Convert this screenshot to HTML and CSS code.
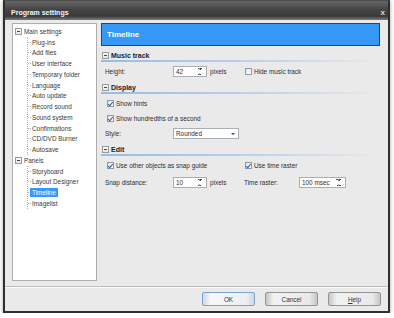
FILE: index.html
```html
<!DOCTYPE html>
<html lang="en">
<head>
    <meta charset="UTF-8">
    <title>Program settings</title>
    <link rel="stylesheet" href="styles.css">
</head>
<body>
    <div class="window">
        <div class="titlebar">
            <span class="title">Program settings</span>
            <span class="close">x</span>
        </div>
        <div class="content">
            <div class="tree">
                <div class="node"><span class="toggle"></span>Main settings</div>
                <div class="children">
                    <div class="leaf">Plug-ins</div>
                    <div class="leaf">Add files</div>
                    <div class="leaf">User interface</div>
                    <div class="leaf">Temporary folder</div>
                    <div class="leaf">Language</div>
                    <div class="leaf">Auto update</div>
                    <div class="leaf">Record sound</div>
                    <div class="leaf">Sound system</div>
                    <div class="leaf">Confirmations</div>
                    <div class="leaf">CD/DVD Burner</div>
                    <div class="leaf">Autosave</div>
                </div>
                <div class="node"><span class="toggle"></span>Panels</div>
                <div class="children">
                    <div class="leaf">Storyboard</div>
                    <div class="leaf">Layout Designer</div>
                    <div class="leaf"><span class="selected">Timeline</span></div>
                    <div class="leaf">Imagelist</div>
                </div>
            </div>

            <div class="panel">
                <div class="panel-head">Timeline</div>

                <div class="sec-head"><span class="toggle"></span>Music track</div>
                <div class="row first">
                    <div class="col1">
                        <span class="label">Height:</span>
                        <span class="spin w34"><span class="val">42</span><span class="arrows"></span></span>
                        <span class="unit">pixels</span>
                    </div>
                    <label class="check"><span class="box"></span>Hide music track</label>
                </div>

                <div class="sec-head"><span class="toggle"></span>Display</div>
                <div class="row first">
                    <label class="check"><span class="box on"></span>Show hints</label>
                </div>
                <div class="row">
                    <label class="check"><span class="box on"></span>Show hundredths of a second</label>
                </div>
                <div class="row">
                    <span class="label">Style:</span>
                    <span class="combo"><span class="val">Rounded</span><span class="drop"></span></span>
                </div>

                <div class="sec-head"><span class="toggle"></span>Edit</div>
                <div class="row first">
                    <div class="col1">
                        <label class="check"><span class="box on"></span>Use other objects as snap guide</label>
                    </div>
                    <label class="check"><span class="box on"></span>Use time raster</label>
                </div>
                <div class="row snap">
                    <div class="col1">
                        <span class="label">Snap distance:</span>
                        <span class="spin w34"><span class="val">10</span><span class="arrows"></span></span>
                        <span class="unit">pixels</span>
                    </div>
                    <span class="label short">Time raster:</span>
                    <span class="spin w47"><span class="val">100 msec</span><span class="arrows"></span></span>
                </div>
            </div>
        </div>
        <div class="footer">
            <button class="btn default">OK</button>
            <button class="btn">Cancel</button>
            <button class="btn"><u>H</u>elp</button>
        </div>
    </div>
</body>
</html>
```

FILE: styles.css
```css
body {
    margin: 0;
    background: #fff;
    font-family: "Liberation Sans", Arial, sans-serif;
    font-size: 6.4px;
    color: #2e2e2e;
}
.window {
    margin-left: 3px;
    width: 387px;
    height: 313px;
    box-sizing: border-box;
    border: 2px solid #2f2f2f;
    border-top: 1px solid #4d4d4d;
    background: #eaeaea;
    box-shadow: 0 1px 4px rgba(0, 0, 0, 0.35);
    display: flex;
    flex-direction: column;
}
.titlebar {
    height: 19px;
    box-sizing: border-box;
    padding: 3px 3px 0 6px;
    display: flex;
    align-items: center;
    justify-content: space-between;
    background: linear-gradient(to bottom, #666 0%, #444 45%, #3a3a3a 80%, #7d7d7d 100%);
    color: #f4f4f4;
}
.title {
    font-weight: bold;
    font-size: 7px;
}
.close {
    font-weight: bold;
    font-size: 8px;
    color: #d8d8d8;
}
.content {
    display: flex;
    gap: 4px;
    padding: 3px 8px 0 7px;
    height: 261px;
    box-sizing: border-box;
}

/* tree on the left */
.tree {
    width: 85px;
    box-sizing: border-box;
    border: 1px solid #adadad;
    background: #fff;
    padding: 2px 0 0 1px;
    color: #3a3a3a;
}
.node,
.leaf {
    height: 10.75px;
    display: flex;
    align-items: center;
    white-space: nowrap;
}
.toggle {
    width: 7px;
    height: 7px;
    box-sizing: border-box;
    border: 1px solid #9a9a9a;
    background: linear-gradient(#fff, #e6e6e6);
    display: flex;
    align-items: center;
    justify-content: center;
    flex-shrink: 0;
}
.toggle::after {
    content: "";
    width: 3px;
    height: 1px;
    background: #444;
}
.node .toggle {
    margin: 0 2px 0 1px;
}
.children {
    margin-left: 13px;
    border-left: 1px dotted #b0b0b0;
}
.leaf::before {
    content: "";
    width: 3px;
    border-top: 1px dotted #b0b0b0;
    margin-right: 1px;
}
.selected {
    background: #3399ff;
    color: #fff;
    margin-left: -2px;
    padding: 1px 2px;
}

/* right panel */
.panel {
    flex: 1;
}
.panel-head {
    height: 23px;
    box-sizing: border-box;
    border: 1px solid #24466c;
    background: #3597f6;
    color: #fff;
    font-weight: bold;
    font-size: 8px;
    padding-left: 5px;
    display: flex;
    align-items: center;
}
.sec-head {
    margin-top: 3px;
    height: 12px;
    box-sizing: border-box;
    padding-bottom: 2px;
    display: flex;
    align-items: center;
    font-weight: bold;
    font-size: 7px;
    color: #1c1c1c;
    background: linear-gradient(to right, #98bbe2, #bcd2ec 55%, rgba(234, 234, 234, 0)) bottom / 100% 2px no-repeat;
}
.panel-head + .sec-head {
    margin-top: 4px;
}
.sec-head .toggle {
    margin: 0 2px 0 1px;
}
.row {
    height: 15px;
    display: flex;
    align-items: center;
    padding-left: 4px;
    white-space: nowrap;
}
.row.first {
    margin-top: 2px;
}
.row.snap {
    margin-top: 2px;
}
.col1 {
    width: 139px;
    display: flex;
    align-items: center;
}
.label {
    width: 68px;
}
.label.short {
    width: 55px;
}
.unit {
    margin-left: 3px;
}
.spin,
.combo {
    height: 11px;
    box-sizing: border-box;
    border: 1px solid #a9aeb5;
    background: #fff;
    display: flex;
    align-items: center;
    justify-content: space-between;
    padding: 0 2px 0 2px;
}
.w34 {
    width: 34px;
}
.w47 {
    width: 47px;
}
.combo {
    width: 66px;
}
.arrows {
    width: 5px;
    height: 7px;
    background:
        linear-gradient(to top right, transparent 50%, #444 50%) left top / 2.5px 2.5px no-repeat,
        linear-gradient(to top left, transparent 50%, #444 50%) right top / 2.5px 2.5px no-repeat,
        linear-gradient(to bottom right, transparent 50%, #444 50%) left bottom / 2.5px 2.5px no-repeat,
        linear-gradient(to bottom left, transparent 50%, #444 50%) right bottom / 2.5px 2.5px no-repeat;
    margin-right: 2px;
}
.drop {
    width: 0;
    height: 0;
    border-left: 2px solid transparent;
    border-right: 2px solid transparent;
    border-top: 2px solid #444;
    margin-right: 1px;
}
.check {
    display: flex;
    align-items: center;
    margin-left: 2px;
}
.col1 + .check {
    margin-left: 1px;
}
.box {
    width: 7px;
    height: 7px;
    box-sizing: border-box;
    border: 1px solid #8e99a5;
    background: linear-gradient(135deg, #e2e2e2, #fff);
    margin-right: 2px;
    display: flex;
    align-items: center;
    justify-content: center;
}
.box.on::after {
    content: "";
    width: 2px;
    height: 3.5px;
    border: solid #2c5a96;
    border-width: 0 1.2px 1.2px 0;
    transform: rotate(40deg);
    margin-top: -1px;
}

/* bottom buttons */
.footer {
    flex: 1;
    margin-top: 5px;
    border-top: 1px solid #bcbcbc;
    box-shadow: inset 0 1px 0 #fbfbfb;
    display: flex;
    justify-content: flex-end;
    align-items: flex-start;
    gap: 10px;
    padding: 5px 7px 0 0;
}
.btn {
    width: 53px;
    height: 14px;
    padding: 0;
    font-family: inherit;
    font-size: 6.4px;
    color: #333;
    border: 1px solid #949494;
    border-radius: 2px;
    background: linear-gradient(to right, #c6c6c6, #f2f2f2 15%, #e9e9e9 85%, #c6c6c6);
}
.btn.default {
    border-color: #7ba3cf;
    background: linear-gradient(to right, #d0d8e0, #f5f7f9 15%, #eceff2 85%, #d0d8e0);
}
```
